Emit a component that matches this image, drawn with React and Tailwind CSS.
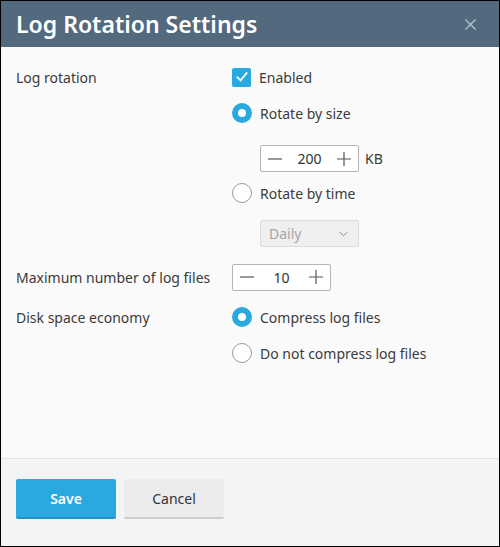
import { useState } from "react";

const Check = () => (
  <svg viewBox="0 0 20 20" className="w-[14px] h-[14px]" fill="none" stroke="white" strokeWidth="2.6" strokeLinecap="square">
    <path d="M3.5 10.5 L8 15 L16.5 4.5" />
  </svg>
);

const Radio = ({ checked, label, onClick }) => (
  <div className="h-[36px] flex items-center gap-2 cursor-pointer" onClick={onClick}>
    {checked ? (
      <span className="w-[20px] h-[20px] rounded-full border-[6px] border-[#29a9df] bg-white box-border" />
    ) : (
      <span className="w-[20px] h-[20px] rounded-full border border-[#9a9a9a] bg-white box-border" />
    )}
    <span>{label}</span>
  </div>
);

const Stepper = ({ value }) => (
  <div className="w-[99px] h-[27px] flex items-center justify-between px-[7px] border border-[#b4b4b4] rounded-[2px] bg-white">
    <svg viewBox="0 0 14 14" className="w-[14px] h-[14px]" stroke="#555" strokeWidth="1.2">
      <path d="M0 7 H14" />
    </svg>
    <span className="text-[#333]">{value}</span>
    <svg viewBox="0 0 14 14" className="w-[14px] h-[14px]" stroke="#555" strokeWidth="1.2">
      <path d="M0 7 H14 M7 0 V14" />
    </svg>
  </div>
);

const App = () => {
  const [rotate, setRotate] = useState("size");
  const [compress, setCompress] = useState(true);

  return (
    <div
      className="w-[500px] h-[547px] border border-black flex flex-col bg-[#fafafa] text-[14px] text-[#3a3a3a]"
      style={{ fontFamily: '"Noto Sans", "Open Sans", sans-serif' }}
    >
      <div className="h-[46px] shrink-0 bg-[#53697e] flex items-center justify-between pl-[15px] pr-[23px]">
        <h1 className="text-white text-[23px] font-semibold leading-none">Log Rotation Settings</h1>
        <svg viewBox="0 0 12 12" className="w-[11px] h-[11px]" stroke="#b9c5d0" strokeWidth="1.3">
          <path d="M0.5 0.5 L11.5 11.5 M11.5 0.5 L0.5 11.5" />
        </svg>
      </div>

      <div className="flex-1 px-[15px] pt-[12px]">
        <div className="flex">
          <div className="w-[216px] h-[36px] flex items-center">Log rotation</div>
          <div className="flex flex-col">
            <div className="h-[36px] flex items-center gap-2">
              <span className="w-[19px] h-[19px] rounded-[2px] bg-[#29a9df] flex items-center justify-center">
                <Check />
              </span>
              <span>Enabled</span>
            </div>
            <Radio checked={rotate === "size"} label="Rotate by size" onClick={() => setRotate("size")} />
            <div className="pl-[28px] pt-[14px] pb-[3px] flex items-center gap-[6px]">
              <Stepper value="200" />
              <span>KB</span>
            </div>
            <Radio checked={rotate === "time"} label="Rotate by time" onClick={() => setRotate("time")} />
            <div className="pl-[28px] pt-[9px]">
              <div className="w-[99px] h-[27px] flex items-center justify-between pl-[8px] pr-[10px] border border-[#dcdcdc] rounded-[2px] bg-[#efefef] text-[#a5a5a5]">
                <span>Daily</span>
                <svg viewBox="0 0 10 6" className="w-[9px] h-[6px]" fill="none" stroke="#888" strokeWidth="1.1">
                  <path d="M1 1 L5 5 L9 1" />
                </svg>
              </div>
            </div>
          </div>
        </div>

        <div className="flex mt-[12px]">
          <div className="w-[216px] h-[36px] flex items-center">Maximum number of log files</div>
          <div className="h-[36px] flex items-center">
            <Stepper value="10" />
          </div>
        </div>

        <div className="flex mt-[4px]">
          <div className="w-[216px] h-[36px] flex items-center">Disk space economy</div>
          <div className="flex flex-col">
            <Radio checked={compress} label="Compress log files" onClick={() => setCompress(true)} />
            <Radio checked={!compress} label="Do not compress log files" onClick={() => setCompress(false)} />
          </div>
        </div>
      </div>

      <div className="h-[88px] shrink-0 border-t border-[#e3e3e3] bg-[#f4f4f4] flex gap-2 px-[15px] pt-[20px]">
        <button className="w-[100px] h-[40px] rounded-[2px] bg-[#29a9df] border-b-2 border-[#2191c4] text-white font-semibold">
          Save
        </button>
        <button className="w-[100px] h-[40px] rounded-[2px] bg-[#ececec] border-b-2 border-[#cdcdcd] text-[#333]">
          Cancel
        </button>
      </div>
    </div>
  );
};

export default App;
